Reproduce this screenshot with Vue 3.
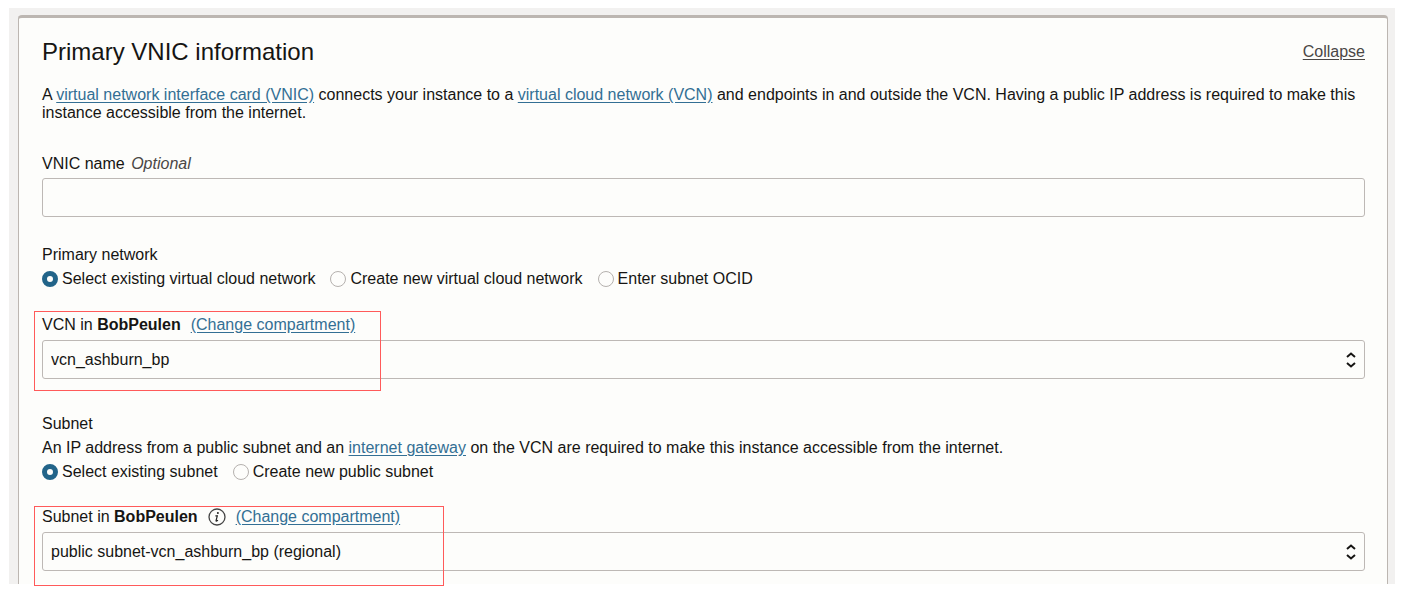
<script setup>
import { ref } from 'vue'

const vnicName = ref('')
const network = ref('existing')
const subnetMode = ref('existing')
const vcn = ref('vcn_ashburn_bp')
const subnet = ref('public subnet-vcn_ashburn_bp (regional)')

const networkOptions = [
  { value: 'existing', label: 'Select existing virtual cloud network' },
  { value: 'new', label: 'Create new virtual cloud network' },
  { value: 'ocid', label: 'Enter subnet OCID' },
]
const subnetOptions = [
  { value: 'existing', label: 'Select existing subnet' },
  { value: 'new', label: 'Create new public subnet' },
]
</script>

<template>
  <main class="page">
    <section class="panel">
      <header class="head">
        <h2>Primary VNIC information</h2>
        <a href="#" class="collapse">Collapse</a>
      </header>

      <p class="intro">
        A <a href="#">virtual network interface card (VNIC)</a> connects your instance to a
        <a href="#">virtual cloud network (VCN)</a> and endpoints in and outside the VCN. Having a
        public IP address is required to make this instance accessible from the internet.
      </p>

      <div class="field name-field">
        <label for="vnic-name" class="label">VNIC name <em>Optional</em></label>
        <input id="vnic-name" v-model="vnicName" type="text" class="control" />
      </div>

      <fieldset class="group network-group">
        <legend>Primary network</legend>
        <div class="radios">
          <label v-for="o in networkOptions" :key="o.value" class="radio">
            <input v-model="network" type="radio" name="network" :value="o.value" />
            <span>{{ o.label }}</span>
          </label>
        </div>
      </fieldset>

      <div class="field vcn-field">
        <div class="label-row">
          <label for="vcn" class="label">VCN in <b>BobPeulen</b></label>
          <a href="#">(Change compartment)</a>
        </div>
        <div class="select">
          <select id="vcn" v-model="vcn" class="control">
            <option>vcn_ashburn_bp</option>
          </select>
          <svg class="arrows" width="12" height="18" viewBox="0 0 12 18" aria-hidden="true">
            <path d="M2 6 6 2.5 10 6M2 12 6 15.5 10 12" />
          </svg>
        </div>
        <div class="mark mark-vcn"></div>
      </div>

      <fieldset class="group subnet-group">
        <legend>Subnet</legend>
        <p class="hint">
          An IP address from a public subnet and an <a href="#">internet gateway</a> on the VCN are
          required to make this instance accessible from the internet.
        </p>
        <div class="radios">
          <label v-for="o in subnetOptions" :key="o.value" class="radio">
            <input v-model="subnetMode" type="radio" name="subnet-mode" :value="o.value" />
            <span>{{ o.label }}</span>
          </label>
        </div>
      </fieldset>

      <div class="field subnet-field">
        <div class="label-row">
          <label for="subnet" class="label">Subnet in <b>BobPeulen</b></label>
          <button type="button" class="info" aria-label="Subnet information">
            <svg width="18" height="18" viewBox="0 0 18 18" aria-hidden="true">
              <circle cx="9" cy="9" r="8" fill="none" stroke="#444" stroke-width="1.3" />
              <circle cx="9.9" cy="5.1" r="1" fill="#222" />
              <path d="M7.4 7.8h1.9L8.1 12.4q-.2.9.6.6l1.3-.8" fill="none" stroke="#222" stroke-width="1.2" />
            </svg>
          </button>
          <a href="#">(Change compartment)</a>
        </div>
        <div class="select">
          <select id="subnet" v-model="subnet" class="control">
            <option>public subnet-vcn_ashburn_bp (regional)</option>
          </select>
          <svg class="arrows" width="12" height="18" viewBox="0 0 12 18" aria-hidden="true">
            <path d="M2 6 6 2.5 10 6M2 12 6 15.5 10 12" />
          </svg>
        </div>
        <div class="mark mark-subnet"></div>
      </div>
    </section>
  </main>
</template>

<style>
body {
  background: #fff;
}
</style>

<style scoped>
.page {
  margin: 8px 7px 12px 9px;
  padding: 7px 7px 0 9px;
  background: #f2f1f0;
  color: #161513;
  font: 16px/20px "Liberation Sans", Arial, sans-serif;
}
.panel {
  padding: 20px 22px 13px 23px;
  background: #fdfdfb;
  border: 1px solid #bcb6b1;
  border-top-width: 3px;
  border-bottom: 0;
  border-radius: 4px 4px 0 0;
}
a {
  color: #336f94;
  text-decoration: underline;
  text-underline-offset: 2px;
}
.head {
  display: flex;
  justify-content: space-between;
  align-items: center;
}
h2 {
  margin: 0;
  font-size: 24px;
  line-height: 28px;
  font-weight: 400;
}
.head .collapse {
  color: #4a4745;
}
.intro {
  margin: 20px 0 0;
  line-height: 18px;
}
.field {
  position: relative;
}
.name-field {
  margin-top: 32px;
}
.label {
  display: block;
}
.label em {
  margin-left: 2px;
  color: #4a4745;
}
.control {
  display: block;
  box-sizing: border-box;
  width: 100%;
  height: 39px;
  margin: 0;
  padding: 0 8px;
  border: 1px solid #bdb8b5;
  border-radius: 3px;
  background: #fdfdfb;
  color: inherit;
  font: inherit;
  outline: none;
}
.name-field .control {
  margin-top: 4px;
}
select.control {
  appearance: none;
  padding-right: 32px;
}
.group {
  min-width: 0;
  margin: 28px 0 0;
  padding: 0;
  border: 0;
}
legend {
  padding: 0;
}
.radios {
  display: flex;
  flex-wrap: wrap;
  gap: 0 15px;
  margin-top: 4px;
}
.radio {
  display: flex;
  align-items: center;
  gap: 4px;
}
.radio input {
  appearance: none;
  box-sizing: border-box;
  flex: none;
  width: 16px;
  height: 16px;
  margin: 0;
  border: 1px solid #b5b1ae;
  border-radius: 50%;
  background: #fdfdfb;
}
.radio input:checked {
  border: 5px solid #226489;
}
.vcn-field {
  margin-top: 26px;
}
.label-row {
  display: flex;
  align-items: center;
}
.label-row a {
  margin-left: 10px;
}
.info {
  display: flex;
  margin: 0 0 0 10px;
  padding: 0;
  border: 0;
  background: none;
}
.select {
  position: relative;
  margin-top: 5px;
}
.arrows {
  position: absolute;
  top: 11px;
  right: 8px;
  pointer-events: none;
}
.arrows path {
  fill: none;
  stroke: #161513;
  stroke-width: 2;
}
.subnet-group {
  margin-top: 35px;
}
.hint {
  margin: 4px 0 0;
}
.subnet-field {
  margin-top: 25px;
}
.mark {
  position: absolute;
  box-sizing: border-box;
  top: -4px;
  left: -8px;
  height: 80px;
  border: 1px solid #ff5a5a;
  pointer-events: none;
}
.mark-vcn {
  width: 347px;
}
.mark-subnet {
  top: -1px;
  width: 410px;
}
</style>
